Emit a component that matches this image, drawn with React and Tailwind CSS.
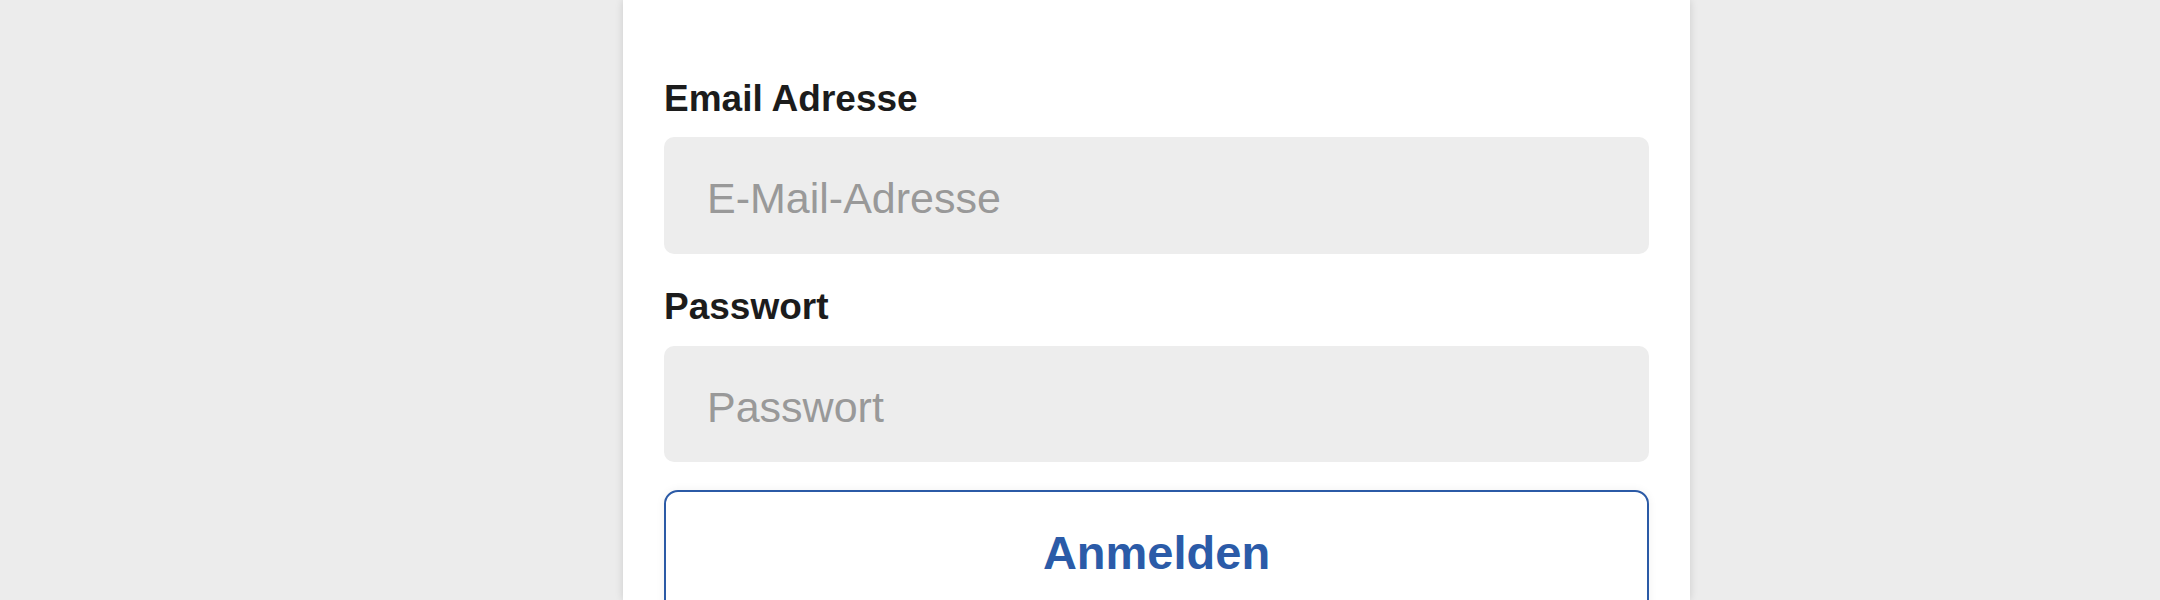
export default function App() {
  return (
    <div className="h-[600px] w-full overflow-hidden bg-[#ececec] font-['Liberation_Sans',Arial,sans-serif]">
      {/* Login card */}
      <div className="ml-[623px] h-full w-[1067px] bg-white px-[41px] pt-[80px] shadow-[0_0_8px_rgba(0,0,0,0.14)]">
        <form className="flex flex-col" onSubmit={(e) => e.preventDefault()}>
          <label htmlFor="email" className="mb-[19px] text-[37px] font-bold leading-[38px] text-[#1c1c1c]">
            Email Adresse
          </label>
          <input
            id="email"
            type="email"
            placeholder="E-Mail-Adresse"
            className="h-[117px] w-full rounded-[10px] bg-[#ededed] px-[43px] pt-[6px] text-[43px] text-[#333] outline-none placeholder:text-[#999]"
          />

          <label htmlFor="password" className="mb-[20px] mt-[34px] text-[37px] font-bold leading-[38px] text-[#1c1c1c]">
            Passwort
          </label>
          <input
            id="password"
            type="password"
            placeholder="Passwort"
            className="h-[116px] w-full rounded-[10px] bg-[#ededed] px-[43px] pt-[6px] text-[43px] text-[#333] outline-none placeholder:text-[#999]"
          />

          <button
            type="submit"
            className="mt-[28px] h-[124px] w-full rounded-[14px] border-2 border-[#2b5aa6] bg-white pt-[2px] text-[47px] font-bold text-[#2b5ba8] shadow-[0_0_10px_rgba(0,0,0,0.06)]"
          >
            Anmelden
          </button>
        </form>
      </div>
    </div>
  );
}
